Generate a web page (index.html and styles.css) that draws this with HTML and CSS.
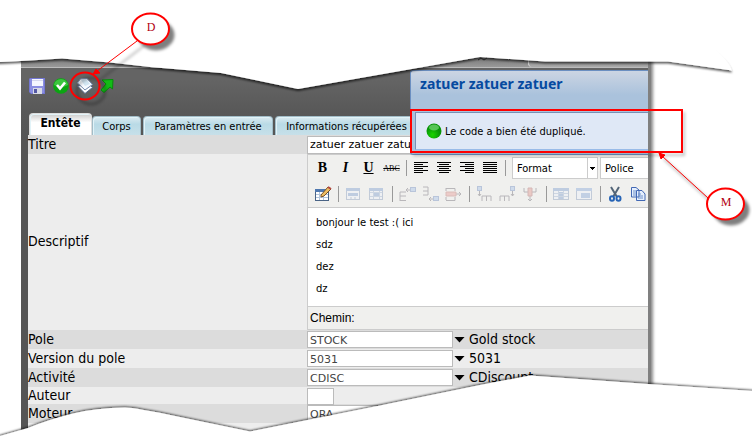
FILE: index.html
```html
<!DOCTYPE html>
<html lang="fr">
<head>
<meta charset="utf-8">
<title>zatuer</title>
<link rel="stylesheet" href="styles.css">
</head>
<body>
<main class="window">
  <div class="topstrip"><span class="toptab"></span></div>
  <nav class="toolbar">
    <button class="tool" aria-label="Enregistrer"><svg width="16" height="16" viewBox="0 0 16 16"><path d="M1 0H16V16H2L0 14V1Z" fill="#7477d2"/><path d="M1 1H15V15H2L1 14Z" fill="#8b8fe2"/><path d="M3 1H14V8H3Z" fill="#f4f6ff"/><path d="M3 2H14V3H3Z" fill="#d5d8ee"/><path d="M4 10H13V16H4Z" fill="#d8dae6"/><path d="M5 11H8V15H5Z" fill="#5458a5"/></svg></button>
    <button class="tool" aria-label="Valider"><svg width="16" height="16" viewBox="0 0 16 16"><circle cx="8" cy="8" r="7.8" fill="#0ba512"/><path d="M1 7A7 6 0 0 1 15 7Q8 11 1 7Z" fill="#3cc63f"/><path d="M4 7L7 10.500L12 4.500" fill="none" stroke="#fff" stroke-width="2.600"/></svg></button>
    <button class="tool" aria-label="Dupliquer"><svg width="16" height="16" viewBox="0 0 16 16"><path d="M.5 8L12 6L15.500 9.500L8 15.500Z" fill="#fff" stroke="#53698d"/><path d="M.5 5L3.500 1L10 .5L15.500 6.500L8 12Z" fill="#f4f9ff" stroke="#7388ab"/><path d="M4 2L9 1L13 6L8 8Z" fill="#d2e6f3"/></svg></button>
    <button class="tool" aria-label="Ouvrir"><svg width="16" height="16" viewBox="0 0 16 16"><path d="M1 2L12 1.500L11.500 11L9 9L3 14.500L0 12L5 6Z" fill="#12bc16" stroke="#078b0b"/></svg></button>
  </nav>
  <nav class="tabs">
    <button class="tab active">Entête</button>
    <button class="tab corps">Corps</button>
    <button class="tab params">Paramètres en entrée</button>
    <button class="tab infos">Informations récupérées</button>
  </nav>
  <form class="form">
    <div class="row titre"><label for="titre">Titre</label><input id="titre" class="title-input" value="zatuer zatuer zatuer"></div>
    <div class="row descriptif"><label for="desc">Descriptif</label>
      <div class="editor">
        <div class="bar">
          <button type="button" class="ed bold">B</button><button type="button" class="ed italic">I</button><button type="button" class="ed under">U</button><button type="button" class="ed strike">ABC</button>
          <i class="sep"></i>
          <button type="button" class="ed" aria-label="Gauche"><svg width="16" height="16"><path d="M1 2.500H15M1 4.500H10M1 6.500H15M1 8.500H10M1 10.500H15M1 12.500H10" stroke="#000"/></svg></button>
          <button type="button" class="ed" aria-label="Centrer"><svg width="16" height="16"><path d="M1 2.500H15M3 4.500H13M1 6.500H15M3 8.500H13M1 10.500H15M3 12.500H13" stroke="#000"/></svg></button>
          <button type="button" class="ed" aria-label="Droite"><svg width="16" height="16"><path d="M1 2.500H15M6 4.500H15M1 6.500H15M6 8.500H15M1 10.500H15M6 12.500H15" stroke="#000"/></svg></button>
          <button type="button" class="ed" aria-label="Justifier"><svg width="16" height="16"><path d="M1 2.500H15M1 4.500H15M1 6.500H15M1 8.500H15M1 10.500H15M1 12.500H15" stroke="#000"/></svg></button>
          <i class="sep"></i>
          <select class="pick" aria-label="Format"><option>Format</option></select>
          <select class="pick" aria-label="Police"><option>Police</option></select>
        </div>
        <div class="bar table-bar">
          <button type="button" class="ed" aria-label="Tableau"><svg width="18" height="18"><rect x="1.500" y="4.500" width="13" height="11" fill="#fff" stroke="#4a6486"/><path d="M1 4H15V7H1Z" fill="#4f78af"/><path d="M2 9.500H14M2 12.500H14M5.500 7V15M9.500 7V15" stroke="#b3c6dd"/><path d="M7 10L14 2L17 4L10 11L7 12Z" fill="#edbd62" stroke="#795328"/><path d="M14 2L17 4" stroke="#b54840" stroke-width="2"/></svg></button>
          <i class="sep"></i>
          <button type="button" class="ed dim" aria-label="Ligne"><svg width="16" height="16"><rect x="1.500" y="2.500" width="13" height="11" fill="#edf2fa" stroke="#8b9fbe"/><path d="M1 2H15V5H1ZM3 7H13V10H3Z" fill="#83a1d0"/><path d="M6 11V13M10 11V13" stroke="#8b9fbe"/></svg></button>
          <button type="button" class="ed dim" aria-label="Cellule"><svg width="16" height="16"><rect x="1.500" y="2.500" width="13" height="11" fill="#edf2fa" stroke="#8b9fbe"/><path d="M1 2H15V5H1ZM6 7H11V10H6Z" fill="#83a1d0"/><path d="M2 6.500H14M2 10.500H14M5.500 5V13M11.500 5V13" stroke="#a4b8d5"/></svg></button>
          <i class="sep"></i>
          <button type="button" class="ed dim" aria-label="Insérer avant"><svg width="17" height="16"><path d="M1 15V6H7M1 10H7M1 14.500H7M7 4H11M9 2L7 4L9 6" fill="none" stroke="#77747c"/><rect x="11.500" y="1.500" width="5" height="4" fill="#a8c2e8" stroke="#7893c4"/></svg></button>
          <button type="button" class="ed dim" aria-label="Insérer après"><svg width="17" height="16"><path d="M1 1H6M1 5H6M1 9H6V1M7 13H11M9 11L7 13L9 15" fill="none" stroke="#77747c"/><rect x="11.500" y="10.500" width="5" height="4" fill="#a8c2e8" stroke="#7893c4"/></svg></button>
          <button type="button" class="ed dim" aria-label="Supprimer ligne"><svg width="17" height="16"><path d="M1 2.500H10V5M1 2V5M1 14.500H10V11M1 14V11M11 8H16M14 6L16 8L14 10" fill="none" stroke="#77747c"/><path d="M1 6H11V10H1Z" fill="#e8a09b" stroke="#c27e7b"/></svg></button>
          <i class="sep"></i>
          <button type="button" class="ed dim" aria-label="Colonne avant"><svg width="16" height="16"><rect x="1.500" y="0.500" width="4" height="4" fill="#a8c2e8" stroke="#7893c4"/><path d="M3.500 5V10M2 8L3.500 10L5 8M6 15V10H15V15M10.500 10V15" fill="none" stroke="#77747c"/></svg></button>
          <button type="button" class="ed dim" aria-label="Colonne après"><svg width="16" height="16"><rect x="11.500" y="0.500" width="4" height="4" fill="#a8c2e8" stroke="#7893c4"/><path d="M13.500 5V10M12 8L13.500 10L15 8M1 15V10H10V15M5.500 10V15" fill="none" stroke="#77747c"/></svg></button>
          <button type="button" class="ed dim" aria-label="Supprimer colonne"><svg width="16" height="16"><path d="M2 2V6H6M14 2V6H10M8 9V15M6 13L8 15L10 13" fill="none" stroke="#77747c"/><path d="M6 2H10V10H6Z" fill="#e49b93" stroke="#b47575"/></svg></button>
          <i class="sep"></i>
          <button type="button" class="ed dim" aria-label="Diviser"><svg width="16" height="16"><rect x="0.500" y="2.500" width="15" height="11" fill="#edf2fa" stroke="#8b9fbe"/><path d="M0 2H16V5H0ZM6 6H11V13H6Z" fill="#83a1d0"/><path d="M1 7.500H15M1 10.500H15M5.500 5V13M10.500 5V13" stroke="#a4b8d5"/></svg></button>
          <button type="button" class="ed dim" aria-label="Fusionner"><svg width="16" height="16"><rect x="0.500" y="2.500" width="15" height="11" fill="#edf2fa" stroke="#8b9fbe"/><path d="M0 2H16V5H0ZM5 7H14V12H5Z" fill="#8cabda"/></svg></button>
          <i class="sep"></i>
          <button type="button" class="ed" aria-label="Couper"><svg width="16" height="16"><path d="M4 1L10 11M12 1L6 11" stroke="#526477" stroke-width="2"/><ellipse cx="5" cy="12.500" rx="2" ry="2.200" fill="none" stroke="#2663b5" stroke-width="2"/><ellipse cx="11.500" cy="12.500" rx="2" ry="2.200" fill="none" stroke="#2663b5" stroke-width="2"/></svg></button>
          <button type="button" class="ed" aria-label="Copier"><svg width="16" height="16"><path d="M1.500 1.500H6L9 4V11H1.500ZM6.500 4.500H12L15 8V14.500H6.500Z" fill="#e5effe" stroke="#4268b4"/><path d="M3 5H6M3 7H6M3 9H6M8 8H11M8 10H13M8 12H13" stroke="#6e91ca"/></svg></button>
        </div>
        <div class="content" id="desc" contenteditable="true"><p>bonjour le test :( ici</p><p>sdz</p><p>dez</p><p>dz</p></div>
        <div class="path">Chemin:</div>
      </div>
    </div>
    <div class="row"><label for="pole">Pole</label><div class="field"><input id="pole" value="STOCK"><button type="button" class="drop" aria-label="Choisir"></button><span>Gold stock</span></div></div>
    <div class="row alt"><label for="version">Version du pole</label><div class="field"><input id="version" value="5031"><button type="button" class="drop" aria-label="Choisir"></button><span>5031</span></div></div>
    <div class="row"><label for="act">Activité</label><div class="field"><input id="act" value="CDISC"><button type="button" class="drop" aria-label="Choisir"></button><span>CDiscount</span></div></div>
    <div class="row alt auteur"><label for="auteur">Auteur</label><div class="field"><input id="auteur" class="small"></div></div>
    <div class="row"><label for="moteur">Moteur</label><div class="field"><input id="moteur" value="ORA"></div></div>
    <div class="row alt"></div>
  </form>
  <aside class="popup"><h2>zatuer zatuer zatuer</h2><p class="message"><svg width="16" height="16"><defs><radialGradient id="ball" cx=".4" cy=".75"><stop offset="0" stop-color="#19d500"/><stop offset="1" stop-color="#079407"/></radialGradient></defs><circle cx="8" cy="8" r="7.500" fill="url(#ball)"/><ellipse cx="8" cy="4.500" rx="5" ry="3" fill="#78d978" opacity=".7"/></svg>Le code a bien été dupliqué.</p></aside>
</main>
<svg class="overlay" width="752" height="436" viewBox="0 0 752 436" aria-hidden="true">
  <defs>
    <filter id="tear" x="-5%" y="-20%" width="110%" height="140%"><feDropShadow dx="0" dy="2" stdDeviation="1.300" flood-color="#000" flood-opacity=".65"/></filter>
    <filter id="tearup" x="-5%" y="-20%" width="110%" height="140%"><feDropShadow dx="0" dy="-1" stdDeviation="1.300" flood-color="#000" flood-opacity=".7"/></filter>
    <filter id="soft" x="-20%" y="-20%" width="160%" height="160%"><feGaussianBlur stdDeviation="1.500"/></filter>
  </defs>
  <path filter="url(#tear)" fill="#fff" d="M-9-30V62L0 62L30 60.500L62 58.500L110 62.500L150 67L221 73L250 79L298 89L480 57L545 61.500H668L732 70.500Q729 61 715 49V-30Z"/>
  <path fill="#fff" d="M710-2H752V80L734 69Q729 60 710 46Z"/>
  <path d="M478 60L481 58L484 60L487 58" fill="none" stroke="#222"/>
  <path filter="url(#tearup)" fill="#fff" d="M-9 466V439L0 436L28 428Q50 419 73 413.500T125 407.500Q135 407.500 180 417L250 431.500L295 422.500L380 405.500L480 385L530 375.500L648 384L762 391.500V466Z"/>
  <g fill="none" stroke="#000" filter="url(#soft)">
    <g opacity=".5"><ellipse cx="156" cy="35" rx="18" ry="15" fill="#000"/><ellipse cx="731" cy="210" rx="18" ry="15" fill="#000"/></g>
    <g opacity=".25"><ellipse cx="91" cy="91" rx="14" ry="13" stroke-width="3"/><path d="M145 45L101 79" stroke-width="2"/><path d="M684 112V155H413M709 200L664 159" stroke-width="2"/></g>
  </g>
  <g fill="none" stroke="#f00">
    <rect x="411" y="110" width="271" height="42" stroke-width="2"/>
    <ellipse cx="85" cy="86" rx="14.500" ry="13.500" stroke-width="2"/>
    <path d="M137 41L97 71M708 198L662 156"/>
    <ellipse cx="150.500" cy="29" rx="18.500" ry="15.500" fill="#fff" stroke-width="2"/>
    <ellipse cx="725.500" cy="204" rx="18.500" ry="15.500" fill="#fff" stroke-width="2"/>
    <path fill="#f00" d="M93 74L96 69L100 73ZM659 153L665 155L661 159Z"/>
  </g>
  <g class="mark"><text x="151" y="31">D</text><text x="726" y="206">M</text></g>
</svg>
</body>
</html>
```
FILE: styles.css
```css
* { box-sizing: border-box; }
body { margin: 0; background: #fff; color: #000; position: relative; min-height: 100vh; overflow: hidden; font-family: "DejaVu Sans Condensed", sans-serif; font-size: 14px; }
button, input, select { font: inherit; color: inherit; margin: 0; padding: 0; border: 0; border-radius: 0; background: none; appearance: none; }
p, h2 { margin: 0; }
.window { position: relative; margin: 0 104px 0 21px; padding: 57px 0 0 7px; background: linear-gradient(#646464 66px, #646464 80px, #585858 112px, #555 140px); box-shadow: 3px 57px 0 #808080, 5px 57px 3px #888; }
.topstrip { height: 11px; margin-left: -7px; display: flex; justify-content: flex-end; background: linear-gradient(#777, #999); border-bottom: 1px solid #bbb; }
.toptab { width: 120px; border-left: 1px solid #ddd; border-radius: 0 0 0 4px; background: linear-gradient(#888, #aaa); }
.toolbar { display: flex; gap: 8px; padding: 10px 0 0 1px; height: 45px; }
.tool { width: 16px; height: 16px; }
.tool svg, .ed svg { display: block; }
.tabs { display: flex; align-items: flex-end; gap: 2px; height: 22px; padding-left: 1px; font-size: 11px; }
.tab { height: 19px; border: 1px solid #a2bdc8; border-bottom: 0; border-radius: 4px 4px 0 0; background: linear-gradient(#dcebf1, #b9dae6 40%, #c7e0e9); box-shadow: inset 1px 1px #e2f3f8; white-space: nowrap; }
.active { width: 63px; height: 22px; margin-right: -2px; padding-bottom: 3px; background: linear-gradient(#ccc, #fff 40%); font-weight: bold; font-size: 12px; border-color: #ddd; }
.corps { width: 49px; }
.params { width: 130px; }
.infos { width: 143px; }
.row { display: grid; grid-template-columns: 279px 1fr; align-items: center; height: 19px; background: #dcdcdc; }
.row.alt { background: #ededed; }
.row.auteur { height: 17px; }
.row.descriptif { height: 176px; background: #ededed; }
.row label, .field span { padding-bottom: 2px; }
.title-input { height: 18px; width: 100%; background: #fff; border: 1px solid #bbb; padding-left: 2px; font-family: "DejaVu Sans", sans-serif; font-size: 11px; }
.editor { display: flex; flex-direction: column; height: 176px; overflow: hidden; background: #f0f0ee; border-left: 1px solid #ccc; border-top: 1px solid #ccc; border-bottom: 1px solid #ccc; }
.bar { display: flex; align-items: center; height: 26px; padding-left: 6px; flex: none; overflow: hidden; }
.ed { width: 17px; height: 18px; margin-right: 6px; flex: none; text-align: center; font-family: "Liberation Serif", serif; font-size: 14px; }
.bold { font-weight: bold; } .italic { font-style: italic; font-weight: bold; } .under { font-weight: bold; text-decoration: underline; } .strike { font-size: 8px; text-decoration: line-through; }
.dim { opacity: .45; }
.sep { width: 1px; height: 16px; margin: 0 6px 0 0; background: #999; flex: none; }
.table-bar .sep { margin-left: 1px; }
.pick { width: 86px; height: 22px; margin-right: 2px; flex: none; padding-left: 4px; background: linear-gradient(#ccc, #ccc) right 9px top 0 / 1px 100% no-repeat, conic-gradient(from 315deg at 50% 100%, #000 90deg, transparent 0) right 2px top 9px / 5px 3px no-repeat, #fff; background: linear-gradient(#ccc, #ccc) right 9px top 0 / 1px 100% no-repeat, conic-gradient(from 315deg at 50% 100%, #000 90deg, transparent 0) right 2px top 9px / 5px 3px no-repeat, #fff; border: 1px solid #ccc; font-size: 11px; }
.content { flex: 1; overflow: hidden; min-height: 0; padding: 4px 8px; background: #fff; border-top: 1px solid #ccc; border-bottom: 1px solid #ccc; font-family: "DejaVu Sans", sans-serif; font-size: 10px; }
.content p { height: 22px; line-height: 22px; }
.path { height: 22px; padding-left: 2px; font: 12px/22px "Liberation Sans", sans-serif; }
.field { display: flex; align-items: center; height: 100%; overflow: hidden; }
.field input { width: 146px; height: 17px; border: 1px solid #bbb; background: #fff; padding: 2px 0 0 2px; color: #444; font-family: "DejaVu Sans", sans-serif; font-size: 11px; }
.field .small { width: 27px; }
.drop { width: 11px; height: 6px; margin: 0 4px 0 1px; background: #000; clip-path: polygon(0 0, 100% 0, 50% 100%); }
.popup { position: absolute; right: 0; top: 70px; width: 238px; height: 85px; padding: 0 0 0 4px; background: linear-gradient(#ccd5e3, #aac2dc 24px); border: 1px solid #6b8fc1; border-right: 0; border-radius: 3px 0 0 3px; }
.popup h2 { height: 41px; padding: 4px 0 0 5px; color: #064aa0; font: bold 14px/18px "Noto Sans", sans-serif; }
.message { display: flex; align-items: center; gap: 3px; height: 38px; padding-left: 10px; background: #dfe8f6; border: 1px solid #7890b5; border-right: 0; border-bottom-color: #99bbe8; font-size: 11px; }
.overlay { position: absolute; left: 0; top: 0; pointer-events: none; }
.mark { fill: #b20010; font: 12px "Liberation Serif", serif; text-anchor: middle; }
```
